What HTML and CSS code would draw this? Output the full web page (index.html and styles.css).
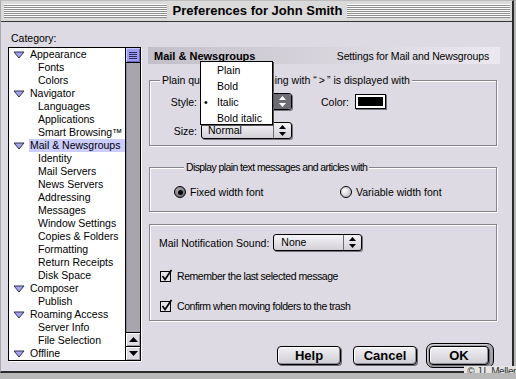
FILE: index.html
```html
<!DOCTYPE html>
<html>
	<head>
		<link rel="stylesheet" href="styles.css">
	</head>
	<body>
		<div class="window">
			<div class="titlebar">
				<span class="stripes"></span>
				<span class="title">Preferences for John Smith</span>
				<span class="stripes"></span>
			</div>
			<div class="content">
				<div class="sidebar">
					<div class="label">Category:</div>
					<div class="listbox">
						<ul class="tree">
							<li class="parent"><svg class="twist" width="12" height="8"><polygon points="1,1 11,1 6,7" /></svg>Appearance</li>
							<li class="child">Fonts</li>
							<li class="child">Colors</li>
							<li class="parent"><svg class="twist" width="12" height="8"><polygon points="1,1 11,1 6,7" /></svg>Navigator</li>
							<li class="child">Languages</li>
							<li class="child">Applications</li>
							<li class="child">Smart Browsing™</li>
							<li class="parent"><svg class="twist" width="12" height="8"><polygon points="1,1 11,1 6,7" /></svg><span class="selected">Mail &amp; Newsgroups</span></li>
							<li class="child">Identity</li>
							<li class="child">Mail Servers</li>
							<li class="child">News Servers</li>
							<li class="child">Addressing</li>
							<li class="child">Messages</li>
							<li class="child">Window Settings</li>
							<li class="child">Copies &amp; Folders</li>
							<li class="child">Formatting</li>
							<li class="child">Return Receipts</li>
							<li class="child">Disk Space</li>
							<li class="parent"><svg class="twist" width="12" height="8"><polygon points="1,1 11,1 6,7" /></svg>Composer</li>
							<li class="child">Publish</li>
							<li class="parent"><svg class="twist" width="12" height="8"><polygon points="1,1 11,1 6,7" /></svg>Roaming Access</li>
							<li class="child">Server Info</li>
							<li class="child">File Selection</li>
							<li class="parent"><svg class="twist" width="12" height="8"><polygon points="1,1 11,1 6,7" /></svg>Offline</li>
						</ul>
						<div class="scrollbar">
							<div class="thumb"><span class="grip"></span></div>
							<div class="track"></div>
							<div class="arrow"><svg width="9" height="5"><polygon points="0,5 4.5,0 9,5" /></svg></div>
							<div class="arrow"><svg width="9" height="5"><polygon points="0,0 4.5,5 9,0" /></svg></div>
						</div>
					</div>
				</div>

				<div class="panel">
					<div class="panel-header">
						<span class="panel-title">Mail &amp; Newsgroups</span>
						<span class="panel-desc">Settings for Mail and Newsgroups</span>
					</div>

					<fieldset class="group">
						<legend>Plain quoted text beginning with “&thinsp;&gt;&thinsp;” is displayed with</legend>
						<div class="row">
							<span class="field-label">Style:</span>
							<div class="popup pressed">
								<span class="popup-text">Italic</span>
								<span class="popup-arrows"><svg width="7" height="11"><polygon points="0,4 3.5,0 7,4" /><polygon points="0,7 3.5,11 7,7" /></svg></span>
							</div>
							<span class="color-label">Color:</span>
							<span class="swatch"><span class="swatch-fill"></span></span>
						</div>
						<div class="row row-gap">
							<span class="field-label">Size:</span>
							<div class="popup">
								<span class="popup-text">Normal</span>
								<span class="popup-arrows"><svg width="7" height="11"><polygon points="0,4 3.5,0 7,4" /><polygon points="0,7 3.5,11 7,7" /></svg></span>
							</div>
						</div>
					</fieldset>

					<fieldset class="group group-radios">
						<legend class="legend-tight">Display plain text messages and articles with</legend>
						<div class="options">
							<label class="option option-first"><span class="radio on"><span class="dot"></span></span>Fixed width font</label>
							<label class="option"><span class="radio"></span>Variable width font</label>
						</div>
					</fieldset>

					<div class="box">
						<div class="row">
							<span>Mail Notification Sound:</span>
							<div class="popup popup-sound">
								<span class="popup-text">None</span>
								<span class="popup-arrows"><svg width="7" height="11"><polygon points="0,4 3.5,0 7,4" /><polygon points="0,7 3.5,11 7,7" /></svg></span>
							</div>
						</div>
						<div class="check-row first-check">
							<svg class="check" width="14" height="14"><rect x="1.5" y="2.5" width="10" height="10" /><path d="M3.5 7 L6 10.5 L12.5 1" /></svg>
							<span class="check-text">Remember the last selected message</span>
						</div>
						<div class="check-row">
							<svg class="check" width="14" height="14"><rect x="1.5" y="2.5" width="10" height="10" /><path d="M3.5 7 L6 10.5 L12.5 1" /></svg>
							<span class="check-text">Confirm when moving folders to the trash</span>
						</div>
					</div>

					<div class="buttons">
						<button class="btn btn-help">Help</button>
						<button class="btn btn-cancel">Cancel</button>
						<span class="default-ring"><button class="btn btn-ok">OK</button></span>
					</div>
				</div>
			</div>

			<ul class="menu">
				<li><span class="mark"></span>Plain</li>
				<li><span class="mark"></span>Bold</li>
				<li><span class="mark">•</span>Italic</li>
				<li><span class="mark"></span>Bold italic</li>
			</ul>

			<div class="credit">© J.L.Meller</div>
		</div>
	</body>
</html>
```

FILE: styles.css
```css
* {
	box-sizing: border-box;
}
html {
	background: #b9b9b9;
}
body {
	margin: 0;
	font-family: "Liberation Sans", Arial, sans-serif;
	font-size: 10.5px;
	color: #000;
}
.window {
	position: relative;
	width: 514px;
	height: 373px;
	background: #dddae3;
	border-left: 1px solid #a9a9a9;
	border-top: 1px solid #bdbdbd;
	border-right: 2px solid #2b2b2b;
	border-bottom: 2px solid #2b2b2b;
}
.titlebar {
	display: flex;
	align-items: center;
	height: 21px;
	padding: 0 2px 0 3px;
	background: #dadada;
	border-bottom: 1px solid #333;
}
.stripes {
	flex: 1;
	height: 14px;
	background: repeating-linear-gradient(to bottom, #fdfdfd 0, #fdfdfd 1px, #8e8e8e 1px, #8e8e8e 2px);
}
.title {
	padding: 0 5px 0 6px;
	font-size: 13px;
	font-weight: bold;
	line-height: 16px;
}
.content {
	display: flex;
	padding: 10px 0 0 7px;
}

/* category list */
.sidebar {
	width: 133px;
}
.label {
	height: 13px;
	line-height: 13px;
	margin: 0 0 2px 3px;
}
.listbox {
	display: flex;
	height: 314px;
	border: 1px solid #000;
	background: #fff;
	box-shadow: 1px 1px 0 #fff;
}
.tree {
	flex: 1;
	margin: 0;
	padding: 0;
	list-style: none;
	overflow: hidden;
}
.tree li {
	display: flex;
	align-items: center;
	height: 13px;
	line-height: 13px;
	white-space: nowrap;
}
.tree .parent {
	padding-left: 4px;
}
.tree .child {
	padding-left: 29px;
}
.twist {
	margin-right: 5px;
}
.twist polygon {
	fill: #a3a1f0;
	stroke: #33334a;
	stroke-width: 1;
}
.selected {
	flex: 1;
	margin-left: -1px;
	padding-left: 1px;
	background: #ccccff;
}
.scrollbar {
	display: flex;
	flex-direction: column;
	width: 15px;
	border-left: 1px solid #000;
}
.thumb {
	display: flex;
	align-items: center;
	justify-content: center;
	height: 15px;
	background: #9e9cf4;
	border-bottom: 1px solid #000;
	box-shadow: inset 1px 1px 0 #c8c8ff, inset -1px -1px 0 #6664b8;
}
.grip {
	width: 8px;
	height: 7px;
	background: repeating-linear-gradient(to bottom, #2a2a5a 0, #2a2a5a 1px, transparent 1px, transparent 2px);
}
.track {
	flex: 1;
	background: #a9a5ae;
	box-shadow: inset 1px 0 0 #8c8892;
}
.arrow {
	display: flex;
	align-items: center;
	justify-content: center;
	height: 14px;
	border-top: 1px solid #000;
	background: #dedce2;
	box-shadow: inset 1px 1px 0 #fff, inset -1px -1px 0 #a09ea6;
}
.arrow polygon {
	fill: #000;
}

/* right panel */
.panel {
	width: 352px;
	margin: 15px 0 0 7px;
}
.panel-header {
	display: flex;
	align-items: center;
	justify-content: space-between;
	height: 17px;
	padding: 0 11px 0 6px;
	background: linear-gradient(to right, #c2bfc8, #ebe9ef);
}
.panel-title {
	font-size: 11px;
	font-weight: bold;
}
.panel-desc {
	letter-spacing: -0.15px;
}
.group {
	width: 348px;
	margin: 10px 0 0 1px;
	padding: 6px 0 6px 0;
	border: 1px solid #86848c;
	box-shadow: 1px 1px 0 #fff, inset 1px 1px 0 #fff;
	min-width: 0;
}
.group legend {
	margin-left: 10px;
	padding: 0 2px;
	line-height: 13px;
	background: #dddae3;
}
.group .legend-tight {
	letter-spacing: -0.6px;
}
.row {
	display: flex;
	align-items: center;
	height: 17px;
}
.row-gap {
	margin-top: 12px;
}
.field-label {
	width: 47px;
	text-align: right;
	margin-right: 4px;
}
.popup {
	display: flex;
	width: 91px;
	height: 17px;
	border: 1px solid #000;
	border-radius: 3px;
	background: linear-gradient(#f4f3f6, #d3d1d8);
	box-shadow: 1px 1px 0 #77757c;
}
.popup-text {
	flex: 1;
	padding-left: 6px;
	line-height: 15px;
}
.popup-arrows {
	display: flex;
	align-items: center;
	justify-content: center;
	width: 18px;
	border-left: 1px solid #6c6a72;
	border-radius: 0 2px 2px 0;
}
.popup-arrows polygon {
	fill: #000;
}
.pressed .popup-arrows {
	background: #6d6b73;
}
.pressed .popup-arrows polygon {
	fill: #fff;
}
.color-label {
	margin-left: 29px;
}
.swatch {
	display: flex;
	width: 31px;
	height: 15px;
	margin-left: 6px;
	padding: 2px;
	border: 1px solid #000;
	background: #fff;
	box-shadow: 1px 1px 0 #77757c;
}
.swatch-fill {
	flex: 1;
	background: #000;
}
.group-radios {
	margin-top: 15px;
	padding: 12px 0 13px 24px;
}
.options {
	display: flex;
	align-items: center;
	height: 12px;
}
.option {
	display: flex;
	align-items: center;
}
.option-first {
	width: 166px;
}
.radio {
	display: flex;
	align-items: center;
	justify-content: center;
	width: 12px;
	height: 12px;
	margin-right: 4px;
	border: 1px solid #000;
	border-radius: 50%;
	background: radial-gradient(circle at 35% 35%, #ffffff, #c6c4cb 70%, #8e8c94);
}
.radio.on {
	background: radial-gradient(circle at 35% 35%, #a8a6ae, #5e5c64);
}
.dot {
	width: 5px;
	height: 5px;
	border-radius: 50%;
	background: #000;
}
.box {
	width: 348px;
	margin: 12px 0 0 1px;
	padding: 9px 9px 8px 9px;
	border: 1px solid #86848c;
	box-shadow: 1px 1px 0 #fff, inset 1px 1px 0 #fff;
}
.popup-sound {
	width: 89px;
	margin-left: 4px;
}
.popup-sound .popup-text {
	padding-left: 7px;
}
.check-row {
	display: flex;
	align-items: center;
	height: 13px;
	margin-top: 17px;
}
.first-check {
	margin-top: 18px;
}
.check-text {
	letter-spacing: -0.45px;
}
.check {
	margin-right: 4px;
	overflow: visible;
}
.check rect {
	fill: #e4e2e8;
	stroke: #000;
	stroke-width: 1;
}
.check path {
	fill: none;
	stroke: #000;
	stroke-width: 1.7;
}
.buttons {
	display: flex;
	align-items: center;
	justify-content: flex-end;
	margin-top: 22px;
	padding-right: 6px;
}
.btn {
	width: 64px;
	height: 19px;
	padding: 0;
	border: 1px solid #000;
	border-radius: 4px;
	background: linear-gradient(#f1f0f4, #cfcdd4);
	box-shadow: inset 1px 1px 0 #fff, inset -1px -1px 0 #8f8d95, 1px 1px 0 #6c6a72;
	font-family: "Liberation Sans", Arial, sans-serif;
	font-size: 13px;
	font-weight: bold;
	color: #000;
}
.btn-help {
	margin-right: 12px;
}
.btn-cancel {
	margin-right: 9px;
}
.default-ring {
	display: flex;
	width: 68px;
	height: 25px;
	padding: 2px;
	border: 1px solid #000;
	border-radius: 7px;
	background: #a4a2aa;
	box-shadow: inset 1px 1px 0 #d0ced6;
}
.btn-ok {
	width: 60px;
}

/* open style menu */
.menu {
	position: absolute;
	left: 199px;
	top: 60px;
	width: 73px;
	height: 64px;
	margin: 0;
	padding: 0;
	list-style: none;
	overflow: hidden;
	background: #fff;
	border: 1px solid #000;
	box-shadow: 1px 1px 0 #555;
}
.menu li {
	display: flex;
	height: 16px;
	line-height: 16px;
	white-space: nowrap;
}
.mark {
	width: 16px;
	padding-left: 3px;
}
.credit {
	position: absolute;
	right: -5px;
	top: 365px;
	height: 12px;
	padding: 0 1px 0 3px;
	background: #e4e4e4;
	color: #333;
	font-size: 10px;
	line-height: 12px;
	letter-spacing: -0.4px;
}
```
